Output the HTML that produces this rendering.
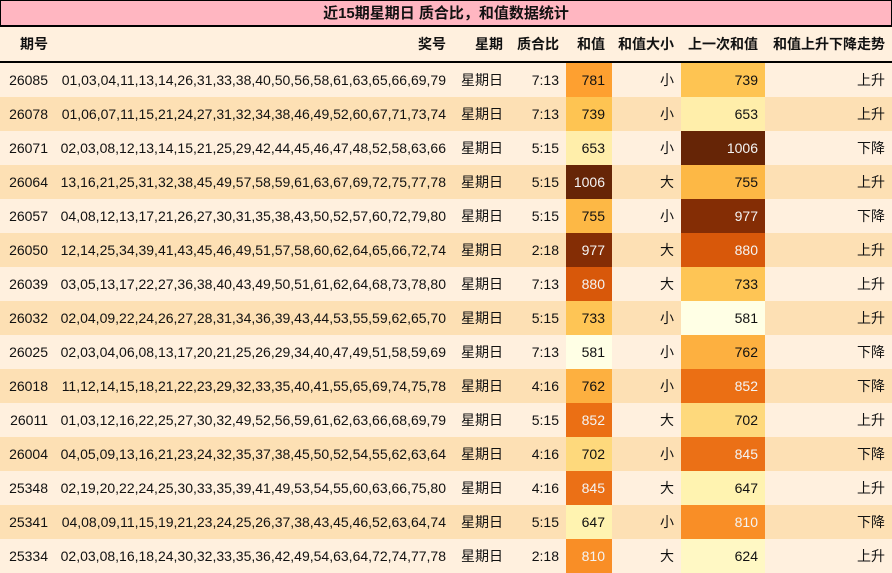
<!DOCTYPE html><html><head><meta charset="utf-8"><style>
body{margin:0;width:892px;height:573px;overflow:hidden;background:#fff0de;font-family:"Liberation Sans","Noto Sans CJK SC",sans-serif;font-size:14px;color:#111}
.t{height:24px;background:#ffb6c1;border:1px solid #000;border-bottom:2px solid #000;text-align:center;font-weight:bold;font-size:15px;line-height:25px}
table{border-collapse:collapse;table-layout:fixed;width:892px}
td,th{padding:0 7px 0 0;text-align:right;white-space:nowrap;overflow:hidden}
th{height:34px;font-weight:bold;border-bottom:2px solid #000;background:#fff0de}
td{height:34px}
tr.o td{background:#fff0de}tr.e td{background:#fde0b4}
.w{color:#f4f4f4}
</style></head><body>
<div class="t">近15期星期日 质合比，和值数据统计</div>
<table>
<colgroup><col style="width:55px"><col style="width:398px"><col style="width:57px"><col style="width:56px"><col style="width:46px"><col style="width:69px"><col style="width:84px"><col style="width:127px"></colgroup>
<tr><th>期号</th><th>奖号</th><th>星期</th><th>质合比</th><th>和值</th><th>和值大小</th><th>上一次和值</th><th>和值上升下降走势</th></tr>
<tr class="o"><td>26085</td><td>01,03,04,11,13,14,26,31,33,38,40,50,56,58,61,63,65,66,69,79</td><td>星期日</td><td>7:13</td><td style="background:#fea030">781</td><td>小</td><td style="background:#fec452">739</td><td>上升</td></tr>
<tr class="e"><td>26078</td><td>01,06,07,11,15,21,24,27,31,32,34,38,46,49,52,60,67,71,73,74</td><td>星期日</td><td>7:13</td><td style="background:#fec452">739</td><td>小</td><td style="background:#ffeeaa">653</td><td>上升</td></tr>
<tr class="o"><td>26071</td><td>02,03,08,12,13,14,15,21,25,29,42,44,45,46,47,48,52,58,63,66</td><td>星期日</td><td>5:15</td><td style="background:#ffeeaa">653</td><td>小</td><td class="w" style="background:#662506">1006</td><td>下降</td></tr>
<tr class="e"><td>26064</td><td>13,16,21,25,31,32,38,45,49,57,58,59,61,63,67,69,72,75,77,78</td><td>星期日</td><td>5:15</td><td class="w" style="background:#662506">1006</td><td>大</td><td style="background:#fdb845">755</td><td>上升</td></tr>
<tr class="o"><td>26057</td><td>04,08,12,13,17,21,26,27,30,31,35,38,43,50,52,57,60,72,79,80</td><td>星期日</td><td>5:15</td><td style="background:#fdb845">755</td><td>小</td><td class="w" style="background:#842d05">977</td><td>下降</td></tr>
<tr class="e"><td>26050</td><td>12,14,25,34,39,41,43,45,46,49,51,57,58,60,62,64,65,66,72,74</td><td>星期日</td><td>2:18</td><td class="w" style="background:#842d05">977</td><td>大</td><td class="w" style="background:#d8580a">880</td><td>上升</td></tr>
<tr class="o"><td>26039</td><td>03,05,13,17,22,27,36,38,40,43,49,50,51,61,62,64,68,73,78,80</td><td>星期日</td><td>7:13</td><td class="w" style="background:#d8580a">880</td><td>大</td><td style="background:#fec555">733</td><td>上升</td></tr>
<tr class="e"><td>26032</td><td>02,04,09,22,24,26,27,28,31,34,36,39,43,44,53,55,59,62,65,70</td><td>星期日</td><td>5:15</td><td style="background:#fec555">733</td><td>小</td><td style="background:#ffffe5">581</td><td>上升</td></tr>
<tr class="o"><td>26025</td><td>02,03,04,06,08,13,17,20,21,25,26,29,34,40,47,49,51,58,59,69</td><td>星期日</td><td>7:13</td><td style="background:#ffffe5">581</td><td>小</td><td style="background:#fdb040">762</td><td>下降</td></tr>
<tr class="e"><td>26018</td><td>11,12,14,15,18,21,22,23,29,32,33,35,40,41,55,65,69,74,75,78</td><td>星期日</td><td>4:16</td><td style="background:#fdb040">762</td><td>小</td><td class="w" style="background:#eb6f14">852</td><td>下降</td></tr>
<tr class="o"><td>26011</td><td>01,03,12,16,22,25,27,30,32,49,52,56,59,61,62,63,66,68,69,79</td><td>星期日</td><td>5:15</td><td class="w" style="background:#eb6f14">852</td><td>大</td><td style="background:#fed97c">702</td><td>上升</td></tr>
<tr class="e"><td>26004</td><td>04,05,09,13,16,21,23,24,32,35,37,38,45,50,52,54,55,62,63,64</td><td>星期日</td><td>4:16</td><td style="background:#fed97c">702</td><td>小</td><td class="w" style="background:#eb7016">845</td><td>下降</td></tr>
<tr class="o"><td>25348</td><td>02,19,20,22,24,25,30,33,35,39,41,49,53,54,55,60,63,66,75,80</td><td>星期日</td><td>4:16</td><td class="w" style="background:#eb7016">845</td><td>大</td><td style="background:#fff3b0">647</td><td>上升</td></tr>
<tr class="e"><td>25341</td><td>04,08,09,11,15,19,21,23,24,25,26,37,38,43,45,46,52,63,64,74</td><td>星期日</td><td>5:15</td><td style="background:#fff3b0">647</td><td>小</td><td class="w" style="background:#f98e26">810</td><td>下降</td></tr>
<tr class="o"><td>25334</td><td>02,03,08,16,18,24,30,32,33,35,36,42,49,54,63,64,72,74,77,78</td><td>星期日</td><td>2:18</td><td class="w" style="background:#f98e26">810</td><td>大</td><td style="background:#fff8c4">624</td><td>上升</td></tr>
</table>
</body></html>
